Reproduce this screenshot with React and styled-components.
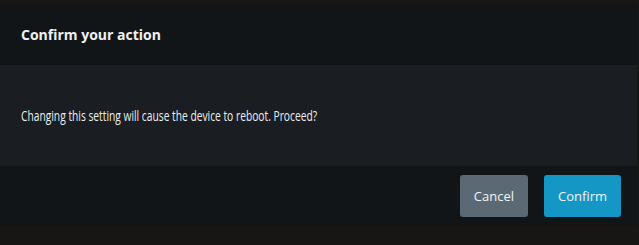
import React from 'react'
import styled, { createGlobalStyle } from 'styled-components'

const GlobalStyle = createGlobalStyle`
  html, body {
    margin: 0;
    padding: 0;
    background: #181614;
    font-family: "Open Sans", "Noto Sans", sans-serif;
  }
`

const Page = styled.div`
  width: 639px;
  height: 245px;
  padding-top: 3px;
  box-sizing: border-box;
  background: #181614;
`

const Dialog = styled.div`
  width: 637px;
  display: flex;
  flex-direction: column;
  background: #121518;
`

const Header = styled.div`
  height: 62px;
  display: flex;
  align-items: center;
  padding: 0 21px;
  box-sizing: border-box;
  background: #121518;
`

const Title = styled.h5`
  margin: 0;
  color: #f0f1f2;
  font-size: 14px;
  font-weight: 700;
`

const Body = styled.div`
  height: 101px;
  display: flex;
  align-items: center;
  padding: 0 21px;
  box-sizing: border-box;
  background: #1a1d21;
`

// the message is set in a narrow face in the reference
const Message = styled.p`
  margin: 0;
  color: #eceef0;
  font-size: 14px;
  white-space: nowrap;
  transform: scaleX(0.732);
  transform-origin: left center;
`

const Footer = styled.div`
  height: 60px;
  display: flex;
  justify-content: flex-end;
  align-items: center;
  gap: 16px;
  padding: 0 16px;
  box-sizing: border-box;
  background: #121518;
`

const Button = styled.button`
  height: 42px;
  padding: 0 14px;
  border: none;
  border-radius: 3px;
  background: ${props => (props.primary ? '#1597c6' : '#5b6975')};
  color: #f2f4f5;
  font-family: inherit;
  font-size: 13px;
  cursor: pointer;
`

export default function App() {
  return (
    <Page>
      <GlobalStyle />
      <Dialog>
        <Header>
          <Title>Confirm your action</Title>
        </Header>
        <Body>
          <Message>Changing this setting will cause the device to reboot. Proceed?</Message>
        </Body>
        <Footer>
          <Button>Cancel</Button>
          <Button primary>Confirm</Button>
        </Footer>
      </Dialog>
    </Page>
  )
}
